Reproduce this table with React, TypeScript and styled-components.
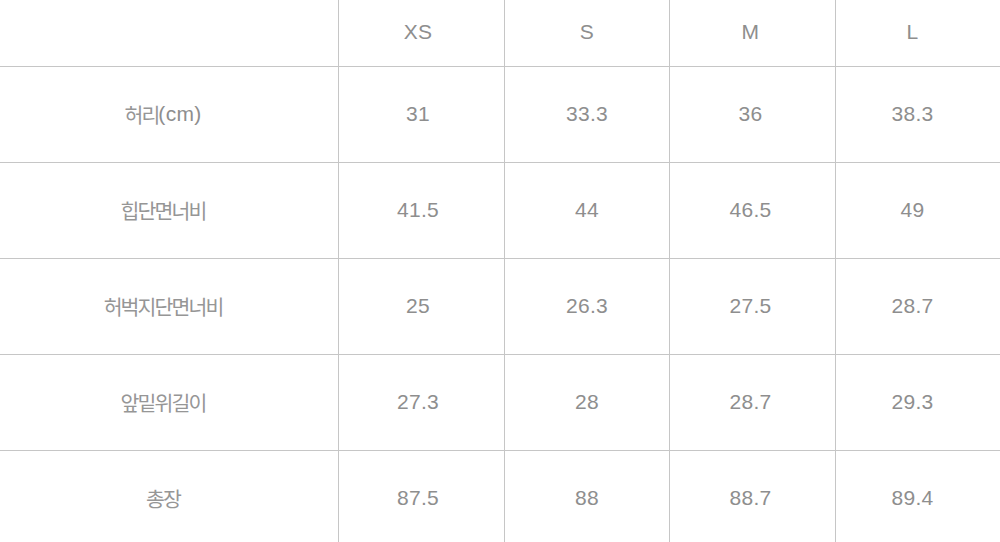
import React from "react";
import styled, { createGlobalStyle } from "styled-components";

const Global = createGlobalStyle`
  html, body { margin: 0; padding: 0; background: #fff; }
  body { font-family: "Liberation Sans", "Noto Sans CJK KR", sans-serif; }
`;

const Grid = styled.div`
  display: grid;
  grid-template-columns: 338px 166px 165px 166px 165px;
  grid-template-rows: 66px repeat(5, 96px);
  width: 1000px;
  height: 542px;
  overflow: hidden;
`;

const Cell = styled.div<{ $col: number; $row: number; $shift: number }>`
  display: flex;
  align-items: center;
  justify-content: center;
  box-sizing: border-box;
  color: #8e8e8e;
  font-size: 21px;
  letter-spacing: 0.3px;
  padding-right: ${(p) => p.$shift * 2}px;
  padding-bottom: 2px;
  border-left: ${(p) => (p.$col > 0 ? "1.5px solid #c6c6c6" : "none")};
  border-top: ${(p) => (p.$row > 0 ? "1.5px solid #c6c6c6" : "none")};
`;

const Label = styled.span`
  font-family: "Noto Sans CJK KR", "Liberation Sans", sans-serif;
  font-size: 20.5px;
  letter-spacing: -1.9px;
  font-weight: 400;
  color: #969696;
`;

const shifts = [6, 3.5, 0, 2, 5.5];
const headers = ["", "XS", "S", "M", "L"];
const rows: [string, string[]][] = [
  ["허리(cm)", ["31", "33.3", "36", "38.3"]],
  ["힙단면너비", ["41.5", "44", "46.5", "49"]],
  ["허벅지단면너비", ["25", "26.3", "27.5", "28.7"]],
  ["앞밑위길이", ["27.3", "28", "28.7", "29.3"]],
  ["총장", ["87.5", "88", "88.7", "89.4"]],
];

function renderLabel(label: string) {
  const m = label.match(/^([^(]*)(\(.*\))?$/);
  const ko = m ? m[1] : label;
  const rest = m && m[2] ? m[2] : "";
  return (
    <>
      <Label>{ko}</Label>
      {rest}
    </>
  );
}

export default function App() {
  return (
    <>
      <Global />
      <Grid>
        {headers.map((h, i) => (
          <Cell key={"h" + i} $col={i} $row={0} $shift={shifts[i]}>
            {h}
          </Cell>
        ))}
        {rows.map(([label, vals], r) => (
          <React.Fragment key={label}>
            <Cell $col={0} $row={r + 1} $shift={shifts[0]}>
              {renderLabel(label)}
            </Cell>
            {vals.map((v, c) => (
              <Cell key={c} $col={c + 1} $row={r + 1} $shift={shifts[c + 1]}>
                {v}
              </Cell>
            ))}
          </React.Fragment>
        ))}
      </Grid>
    </>
  );
}
